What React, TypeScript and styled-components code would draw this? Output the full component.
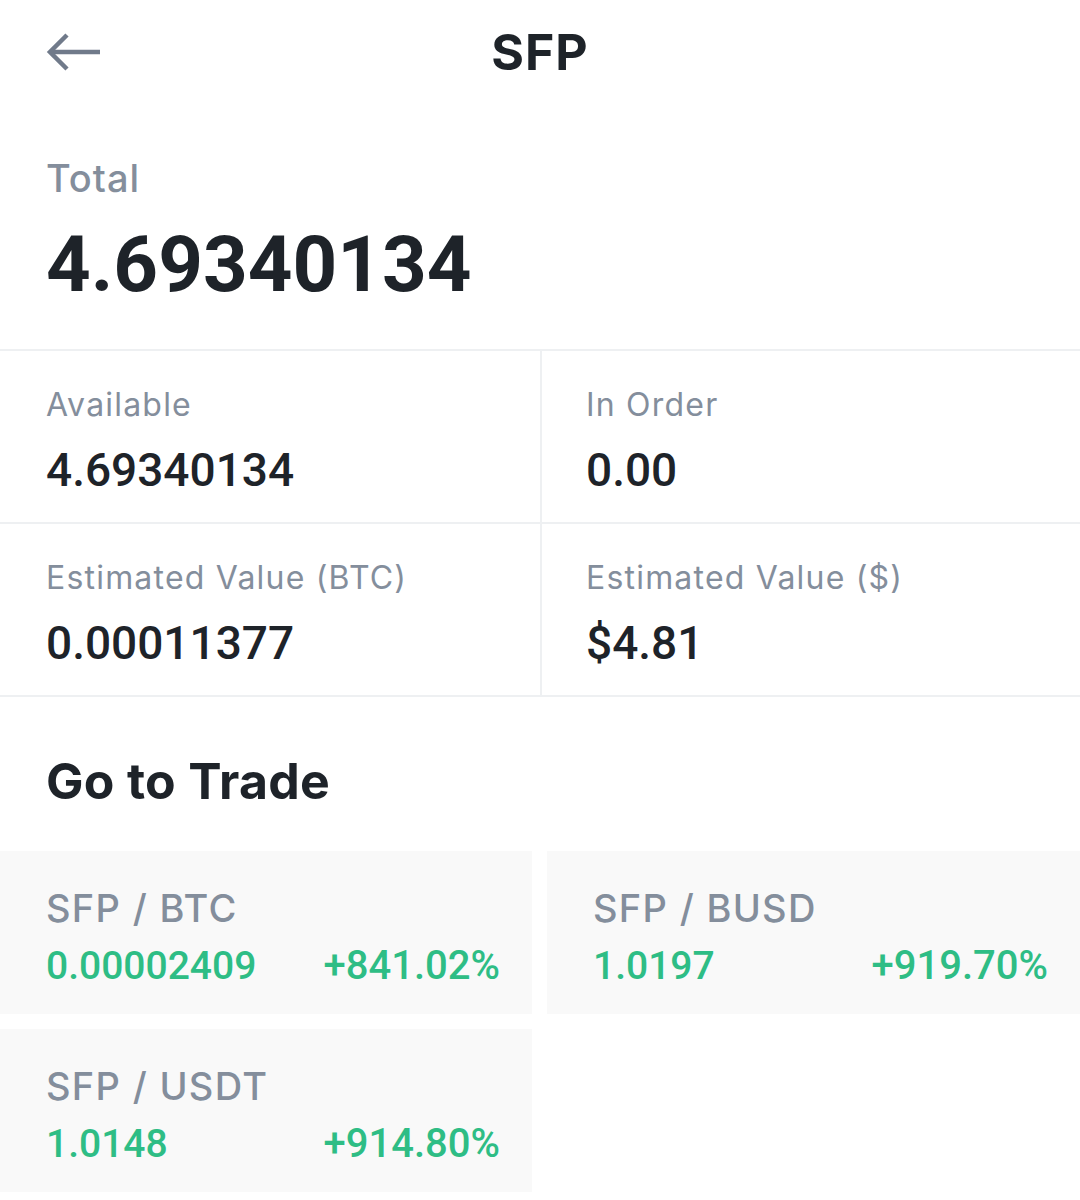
import React from "react";
import styled, { createGlobalStyle } from "styled-components";

const GlobalStyle = createGlobalStyle`
  html, body { margin: 0; padding: 0; background: #ffffff; }
  body { width: 1080px; font-family: "Inter", "Roboto", sans-serif; -webkit-font-smoothing: antialiased; }
  * { box-sizing: border-box; }
`;

const Page = styled.div`
  width: 1080px;
  min-height: 1200px;
  background: #ffffff;
  color: #1e2329;
`;

const Header = styled.header`
  display: grid;
  grid-template-columns: 1fr auto 1fr;
  align-items: center;
  height: 104px;
  padding: 0 46px;
`;

const BackButton = styled.button`
  justify-self: start;
  display: flex;
  align-items: center;
  padding: 0;
  border: none;
  background: none;
  color: #707a8a;
  cursor: pointer;
`;

const Title = styled.h1`
  margin: 0;
  font-family: "Inter", sans-serif;
  font-weight: 700;
  font-size: 50px;
  letter-spacing: 1px;
  line-height: 1;
  color: #1e2329;
`;

const TotalBlock = styled.section`
  padding: 52px 46px 44px;
  border-bottom: 2px solid #eef0f2;
`;

const TotalLabel = styled.div`
  font-family: "Inter", sans-serif;
  font-weight: 500;
  font-size: 38px;
  letter-spacing: 1px;
  line-height: 44px;
  color: #848e9c;
`;

const TotalValue = styled.div`
  margin-top: 25px;
  font-family: "Roboto", sans-serif;
  font-weight: 700;
  font-size: 78px;
  line-height: 80px;
  color: #1e2329;
`;

const StatGrid = styled.div`
  display: grid;
  grid-template-columns: 1fr 1fr;
`;

const StatCell = styled.div<{ $right?: boolean }>`
  height: 173px;
  padding: 34px 0 0 ${(p) => (p.$right ? "44px" : "46px")};
  border-bottom: 2px solid #eef0f2;
  border-left: ${(p) => (p.$right ? "2px solid #eef0f2" : "none")};
`;

const StatLabel = styled.div`
  font-family: "Inter", sans-serif;
  font-weight: 400;
  font-size: 32px;
  letter-spacing: 1.2px;
  line-height: 40px;
  color: #848e9c;
`;

const StatValue = styled.div`
  margin-top: 18px;
  font-family: "Roboto", sans-serif;
  font-weight: 500;
  font-size: 46px;
  line-height: 54px;
  color: #1e2329;
`;

const SectionTitle = styled.h2`
  margin: 0;
  padding: 54px 46px 40px;
  font-family: "Inter", sans-serif;
  font-weight: 700;
  font-size: 50px;
  letter-spacing: 0.3px;
  line-height: 60px;
  color: #1e2329;
`;

const TradeGrid = styled.div`
  display: grid;
  grid-template-columns: 532px 533px;
  column-gap: 15px;
  row-gap: 15px;
`;

const TradeCard = styled.div`
  height: 163px;
  padding: 35px 32px 0 46px;
  background: #f9f9f9;
`;

const PairName = styled.div`
  font-family: "Inter", sans-serif;
  font-weight: 500;
  font-size: 38px;
  letter-spacing: 1.3px;
  line-height: 44px;
  color: #848e9c;
`;

const PriceRow = styled.div`
  margin-top: 12px;
  display: flex;
  justify-content: space-between;
  align-items: baseline;
  font-family: "Roboto", sans-serif;
  font-weight: 500;
  font-size: 39px;
  line-height: 48px;
  color: #2ebd85;
`;

const Change = styled.span`
  font-size: 40px;
`;

const stats = [
  { label: "Available", value: "4.69340134" },
  { label: "In Order", value: "0.00" },
  { label: "Estimated Value (BTC)", value: "0.00011377" },
  { label: "Estimated Value ($)", value: "$4.81" },
];

const pairs = [
  { name: "SFP / BTC", price: "0.00002409", change: "+841.02%" },
  { name: "SFP / BUSD", price: "1.0197", change: "+919.70%" },
  { name: "SFP / USDT", price: "1.0148", change: "+914.80%" },
];

const BackArrow = () => (
  <svg width="56" height="40" viewBox="0 0 56 40" fill="none">
    <path d="M54 20H4" stroke="currentColor" strokeWidth="4.5" />
    <path d="M21 3L4 20L21 37" stroke="currentColor" strokeWidth="4.5" />
  </svg>
);

export default function App() {
  return (
    <Page>
      <GlobalStyle />
      <Header>
        <BackButton aria-label="Back">
          <BackArrow />
        </BackButton>
        <Title>SFP</Title>
        <div />
      </Header>
      <TotalBlock>
        <TotalLabel>Total</TotalLabel>
        <TotalValue>4.69340134</TotalValue>
      </TotalBlock>
      <StatGrid>
        {stats.map((s, i) => (
          <StatCell key={s.label} $right={i % 2 === 1}>
            <StatLabel>{s.label}</StatLabel>
            <StatValue>{s.value}</StatValue>
          </StatCell>
        ))}
      </StatGrid>
      <SectionTitle>Go to Trade</SectionTitle>
      <TradeGrid>
        {pairs.map((p) => (
          <TradeCard key={p.name}>
            <PairName>{p.name}</PairName>
            <PriceRow>
              <span>{p.price}</span>
              <Change>{p.change}</Change>
            </PriceRow>
          </TradeCard>
        ))}
      </TradeGrid>
    </Page>
  );
}
